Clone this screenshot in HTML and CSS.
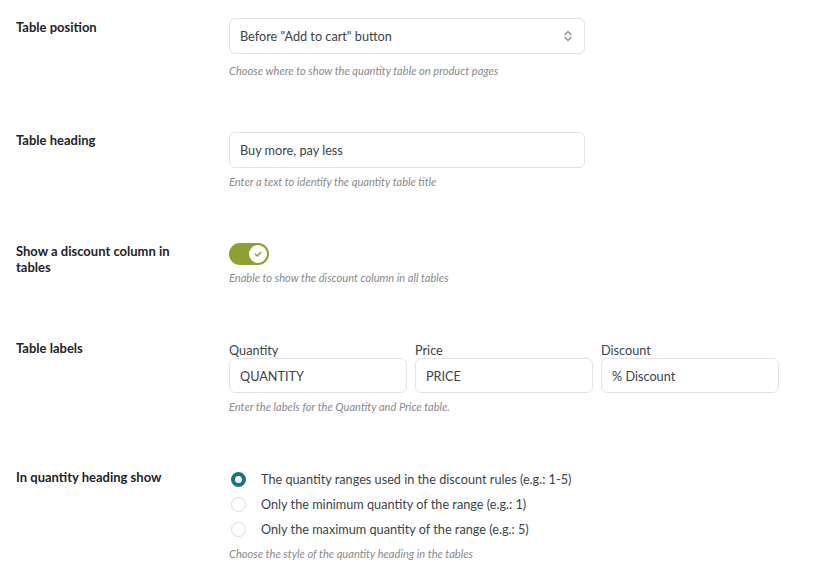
FILE: index.html
```html
<!DOCTYPE html>
<html>
<head>
<meta charset="utf-8">
<link rel="stylesheet" href="styles.css">
</head>
<body>
<div class="settings">
  <div class="row tight">
    <div class="label l-first">Table position</div>
    <div class="field">
      <div class="select wide">
        <span>Before "Add to cart" button</span>
        <svg class="chev" width="10" height="14" viewBox="0 0 10 14"><path d="M2 5.5 L5 2.5 L8 5.5 M2 8.5 L5 11.5 L8 8.5" fill="none" stroke="#8c8f94" stroke-width="1.3" stroke-linecap="round" stroke-linejoin="round"/></svg>
      </div>
      <div class="help h1">Choose where to show the quantity table on product pages</div>
    </div>
  </div>
  <div class="row tight">
    <div class="label">Table heading</div>
    <div class="field">
      <div class="input wide">Buy more, pay less</div>
      <div class="help">Enter a text to identify the quantity table title</div>
    </div>
  </div>
  <div class="row">
    <div class="label narrow">Show a discount column in tables</div>
    <div class="field">
      <div class="toggle"><span class="knob"><svg width="10" height="10" viewBox="0 0 10 10"><path d="M2.5 5.2 L4.3 7 L7.6 3.4" fill="none" stroke="#8da033" stroke-width="1.5" stroke-linecap="round" stroke-linejoin="round"/></svg></span></div>
      <div class="help h3">Enable to show the discount column in all tables</div>
    </div>
  </div>
  <div class="row">
    <div class="label">Table labels</div>
    <div class="field">
      <div class="triple">
        <div class="col"><div class="sublabel">Quantity</div><div class="input">QUANTITY</div></div>
        <div class="col"><div class="sublabel">Price</div><div class="input">PRICE</div></div>
        <div class="col"><div class="sublabel">Discount</div><div class="input">% Discount</div></div>
      </div>
      <div class="help">Enter the labels for the Quantity and Price table.</div>
    </div>
  </div>
  <div class="row last">
    <div class="label">In quantity heading show</div>
    <div class="field">
      <div class="radios">
        <div class="radio-row"><span class="radio on"></span><span>The quantity ranges used in the discount rules (e.g.: 1-5)</span></div>
        <div class="radio-row"><span class="radio"></span><span>Only the minimum quantity of the range (e.g.: 1)</span></div>
        <div class="radio-row"><span class="radio"></span><span>Only the maximum quantity of the range (e.g.: 5)</span></div>
      </div>
      <div class="help h5">Choose the style of the quantity heading in the tables</div>
    </div>
  </div>
</div>
</body>
</html>
```

FILE: styles.css
```css
html, body {
  margin: 0;
  padding: 0;
  background: #ffffff;
}
body {
  font-family: "Segoe UI", Lato, "Open Sans", sans-serif;
  font-size: 13px;
  color: #1d2327;
}
.settings {
  padding: 18px 0 0 16px;
}
.row {
  display: grid;
  grid-template-columns: 213px 1fr;
  padding-bottom: 55px;
}
.row.tight {
  padding-bottom: 54px;
}
.row.last {
  padding-bottom: 0;
}
.label {
  font-weight: 700;
  font-size: 13px;
  line-height: 16px;
  color: #1d2327;
}
.label.l-first {
  padding-top: 1px;
}
.label.narrow {
  max-width: 165px;
}
.field {
  display: flex;
  flex-direction: column;
}
.select, .input {
  box-sizing: border-box;
  height: 36px;
  border: 1px solid #e3e3e6;
  border-radius: 6px;
  padding: 0 10px;
  display: flex;
  align-items: center;
  justify-content: space-between;
  color: #3c434a;
  font-size: 12.7px;
  background: #fff;
}
.wide {
  width: 356px;
}
.chev {
  margin-right: 1px;
}
.help {
  margin-top: 7px;
  font-size: 11.1px;
  font-style: italic;
  color: #8a8a8a;
  line-height: 14px;
}
.help.h1 {
  margin-top: 10px;
}
.help.h3 {
  margin-top: 6px;
}
.help.h5 {
  margin-top: 8px;
}
.toggle {
  width: 40px;
  height: 22px;
  border-radius: 11px;
  background: #8da033;
  position: relative;
}
.knob {
  position: absolute;
  right: 2px;
  top: 2px;
  width: 18px;
  height: 18px;
  border-radius: 50%;
  background: #fff;
  display: flex;
  align-items: center;
  justify-content: center;
}
.triple {
  display: flex;
  gap: 8px;
}
.col {
  width: 178px;
}
.sublabel {
  color: #3c434a;
  font-size: 12.7px;
  line-height: 20px;
  margin-bottom: -2px;
}
.triple .input {
  height: 35px;
}
.radios {
  display: flex;
  flex-direction: column;
  gap: 5px;
}
.radio-row {
  display: flex;
  align-items: center;
  height: 20px;
  color: #3c434a;
  font-size: 12.7px;
}
.radio {
  box-sizing: border-box;
  width: 15px;
  height: 15px;
  border-radius: 50%;
  border: 1px solid #dcdcde;
  margin: 0 15px 0 2px;
  flex: none;
}
.radio.on {
  border: 4px solid #1b6e8f;
  background: #fff;
}
```
